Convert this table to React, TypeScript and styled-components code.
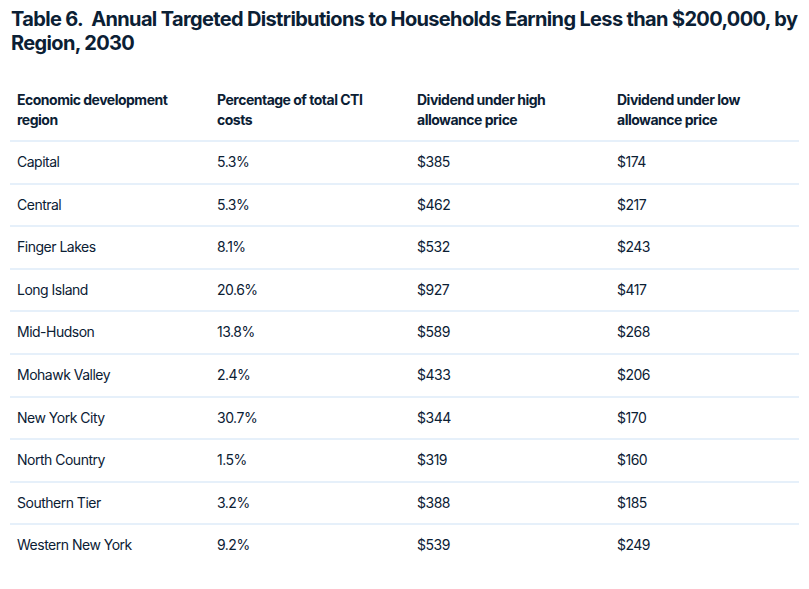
import React from "react";
import styled, { createGlobalStyle } from "styled-components";

const Global = createGlobalStyle`
  html, body { margin: 0; padding: 0; background: #ffffff; }
  body { font-family: Inter, "Noto Sans", Arial, sans-serif; color: #0b2034; }
`;

const Page = styled.div`
  padding: 7px 0 0 10px;
`;

const Title = styled.h2`
  margin: 0 0 0 1px;
  font-size: 20px;
  line-height: 24px;
  font-weight: 700;
  letter-spacing: -0.65px;
  color: #0b2034;
`;

const Table = styled.table`
  margin-top: 35px;
  width: 789px;
  border-collapse: collapse;
  table-layout: fixed;
`;

const Col = styled.col<{ $w?: number }>`
  width: ${(p) => (p.$w ? `${p.$w}px` : "auto")};
`;

const HeadCell = styled.th`
  text-align: left;
  vertical-align: top;
  font-size: 14px;
  line-height: 20px;
  font-weight: 700;
  letter-spacing: -0.5px;
  padding: 0 24px 10px 7px;
  border-bottom: 2px solid #e6f0fa;
`;

const Row = styled.tr<{ $last?: boolean }>`
  border-bottom: ${(p) => (p.$last ? "none" : "2px solid #e6f0fa")};
`;

const Cell = styled.td`
  font-size: 14px;
  line-height: 20.6px;
  font-weight: 400;
  letter-spacing: -0.5px;
  padding: 10px 7px;
  vertical-align: middle;
`;

const rows: [string, string, string, string][] = [
  ["Capital", "5.3%", "$385", "$174"],
  ["Central", "5.3%", "$462", "$217"],
  ["Finger Lakes", "8.1%", "$532", "$243"],
  ["Long Island", "20.6%", "$927", "$417"],
  ["Mid-Hudson", "13.8%", "$589", "$268"],
  ["Mohawk Valley", "2.4%", "$433", "$206"],
  ["New York City", "30.7%", "$344", "$170"],
  ["North Country", "1.5%", "$319", "$160"],
  ["Southern Tier", "3.2%", "$388", "$185"],
  ["Western New York", "9.2%", "$539", "$249"],
];

export default function App() {
  return (
    <Page>
      <Global />
      <Title>
        Table 6.&nbsp; Annual Targeted Distributions to Households Earning Less than $200,000, by
        Region, 2030
      </Title>
      <Table>
        <colgroup>
          <Col $w={200} />
          <Col $w={200} />
          <Col $w={200} />
          <Col />
        </colgroup>
        <thead>
          <tr>
            <HeadCell>Economic development region</HeadCell>
            <HeadCell>Percentage of total CTI costs</HeadCell>
            <HeadCell>Dividend under high allowance price</HeadCell>
            <HeadCell>Dividend under low allowance price</HeadCell>
          </tr>
        </thead>
        <tbody>
          {rows.map((r, i) => (
            <Row key={r[0]} $last={i === rows.length - 1}>
              {r.map((c, j) => (
                <Cell key={j}>{c}</Cell>
              ))}
            </Row>
          ))}
        </tbody>
      </Table>
    </Page>
  );
}
